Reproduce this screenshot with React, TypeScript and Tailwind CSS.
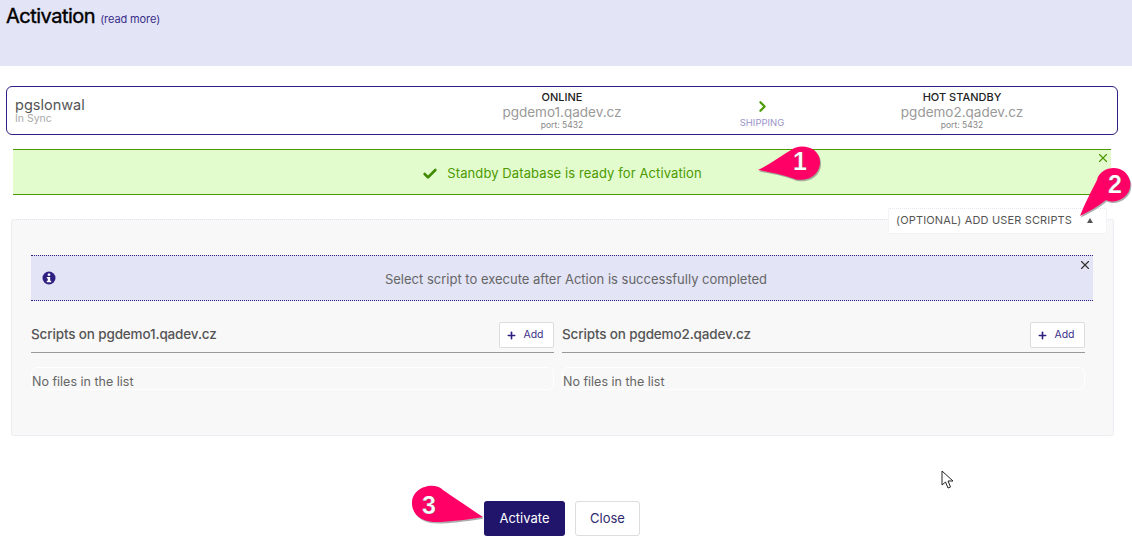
import React from "react";
import { Check, ChevronRight, Plus, X } from "lucide-react";

const font = "font-['Inter','Lato',sans-serif]";

function ScriptColumn({ host }: { host: string }) {
  return (
    <div className="w-[523px]">
      <div className="flex h-[32px] items-start justify-between border-b border-[#999999]">
        <span className="mt-[3px] text-[13.5px] font-medium tracking-[-0.15px] text-[#555555]">Scripts on {host}</span>
        <button className="mt-[1px] flex h-[26px] w-[55px] items-center justify-center gap-[6px] pr-[3px] rounded-[2px] border border-[#dddddd] bg-white text-[10.5px] text-[#3a2f8a]">
          <Plus size={11} strokeWidth={3.5} className="text-[#2e1f80]" />
          Add
        </button>
      </div>
      <div className="mt-[14px] flex h-[23px] items-end overflow-hidden rounded-[6px] border border-[#ffffff] text-[12.5px] leading-[15px] text-[#666666]">
        No files in the list
      </div>
    </div>
  );
}

function Pin({ n, d, tx, ty, className }: { n: string; d: string; tx: number; ty: number; className: string }) {
  return (
    <svg className={`absolute ${className}`} viewBox="0 0 72 60" width="72" height="60">
      <path d={d} transform="translate(1 1.5)" fill="#777777" opacity="0.6" />
      <path d={d} fill="#ff0066" />
      <text x={tx} y={ty} textAnchor="middle" fontSize="25" fontWeight="700" fill="#ffffff" stroke="#333333" strokeWidth="0.2" fontFamily="'Liberation Sans', sans-serif">{n}</text>
    </svg>
  );
}

export default function App() {
  return (
    <div className={`relative h-[548px] w-[1132px] overflow-hidden bg-white ${font}`}>
      <header className="h-[66px] bg-[#e3e4f6] pl-[6px] pt-[3px]">
        <h1 className="inline text-[20px] leading-[26px] tracking-[-0.5px] text-black [-webkit-text-stroke:0.4px_black]">Activation</h1>
        <a className="ml-[5px] text-[11px] tracking-[-0.1px] text-[#3a2f8a]">(read more)</a>
      </header>

      <section className="ml-[6px] mt-[20px] flex h-[49px] w-[1112px] items-center rounded-[6px] border border-[#2e1f80]">
        <div className="flex-1 pl-[8px]">
          <div className="text-[14.5px] leading-[16px] text-[#555555]">pgslonwal</div>
          <div className="text-[10.5px] leading-[12px] text-[#aaaaaa]">In Sync</div>
        </div>
        <div className="flex w-[200px] flex-col items-center pt-[1px]">
          <span className="text-[11px] font-medium leading-[13px] text-[#222222]">ONLINE</span>
          <span className="text-[13.5px] leading-[16px] text-[#999999]">pgdemo1.qadev.cz</span>
          <span className="text-[8.5px] leading-[11px] text-[#888888]">port: 5432</span>
        </div>
        <div className="flex w-[200px] flex-col items-center pt-[5px]">
          <ChevronRight size={17} strokeWidth={3} className="text-[#4c9a00]" />
          <span className="mt-[2px] text-[9.5px] leading-[11px] text-[#9a94c8]">SHIPPING</span>
        </div>
        <div className="flex w-[200px] flex-col items-center pt-[1px]">
          <span className="text-[11px] font-medium leading-[13px] text-[#222222]">HOT STANDBY</span>
          <span className="text-[13.5px] leading-[16px] text-[#999999]">pgdemo2.qadev.cz</span>
          <span className="text-[8.5px] leading-[11px] text-[#888888]">port: 5432</span>
        </div>
        <div className="w-[55px]" />
      </section>

      <section className="relative ml-[13px] mt-[14px] flex h-[46px] w-[1098px] items-center justify-center gap-[9px] border-y border-[#4c9a00] bg-[#e3fccd] pt-[3px] text-[13px] tracking-[0.1px] text-[#4c9a00]">
        <Check size={16} strokeWidth={4} className="text-[#3f8a00]" />
        <span>Standby Database is ready for Activation</span>
        <X size={14} strokeWidth={2} className="absolute right-[1px] top-[1px]" />
      </section>

      <section className="relative ml-[11px] mt-[24px] h-[217px] w-[1103px] rounded-[3px] border border-dotted border-[#e2e2ee] bg-[#f8f8f8] pl-[19px] pt-[35px]">
        <div className="absolute right-[6px] top-[-12px] flex h-[26px] w-[219px] items-center rounded-[2px] border border-dotted border-[#e6e6f0] bg-white pl-[7px] pb-[1px] text-[11px] tracking-[0.15px] text-[#555555]">
          (OPTIONAL) ADD USER SCRIPTS
          <span className="absolute right-[13px] top-[9px] h-0 w-0 border-x-[3px] border-b-[5px] border-x-transparent border-b-[#555555]" />
        </div>
        <div className="relative flex h-[46px] w-[1062px] items-center justify-center border-y border-dotted border-[#2e1f80] bg-[#e3e4f6] pl-[28px] pt-[3px] text-[13px] text-[#666666]">
          <svg className="absolute left-[11px] top-[15px]" width="14" height="14" viewBox="0 0 14 14">
            <circle cx="7" cy="7" r="6.5" fill="#2e1f80" />
            <rect x="5.8" y="2.6" width="2.4" height="2.2" rx="0.6" fill="#ffffff" />
            <path d="M4.8 6 H8.2 V9.8 H9.2 V11.2 H4.8 V9.8 H5.8 V7.4 H4.8 Z" fill="#ffffff" />
          </svg>
          <span>Select script to execute after Action is successfully completed</span>
          <X size={14} strokeWidth={2} className="absolute right-[1px] top-[2px] text-[#333333]" />
        </div>
        <div className="mt-[20px] flex gap-[8px]">
          <ScriptColumn host="pgdemo1.qadev.cz" />
          <ScriptColumn host="pgdemo2.qadev.cz" />
        </div>
      </section>

      <footer className="mt-[65px] flex justify-center gap-[10px] pr-[8px]">
        <button className="h-[35px] w-[81px] rounded-[3px] bg-[#20146b] text-[13px] text-white">Activate</button>
        <button className="h-[35px] w-[65px] rounded-[3px] border border-[#dddddd] bg-white text-[13px] text-[#2e2a70]">Close</button>
      </footer>

      <Pin className="left-[755px] top-[143px]" n="1" d="M3 27 C14 22 26 13 36 7 C44 0 65 3 65 19 C65 35 47 40 37 35 C26 31 14 29 3 27 Z" tx="45" ty="27" />
      <Pin className="left-[1075px] top-[163px]" n="2" d="M5 53 C10 40 17 27 22 17 C25 3 50 -1 55 18 C58 34 40 42 31 37 C22 44 13 49 5 53 Z" tx="40" ty="30" />
      <Pin className="left-[411px] top-[484px]" n="3" d="M72 33 C60 35 45 37 30 38 C14 39 1 33 1 19 C1 3 23 -3 32 6 C45 15 60 25 72 33 Z" tx="18" ty="30" />

      <svg className="absolute left-[941px] top-[470px]" width="14" height="20" viewBox="0 0 14 20">
        <path d="M1 1 L1 15 L4.5 12 L7 18 L9.5 17 L7 11 L12 11 Z" fill="#ffffff" stroke="#222222" strokeWidth="1" />
      </svg>
    </div>
  );
}
